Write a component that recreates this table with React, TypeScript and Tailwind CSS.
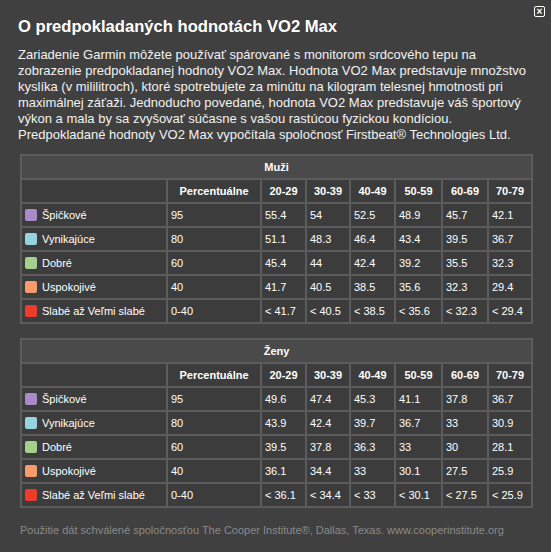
import React from 'react'

type Row = { label: string; color: string; pct: string; values: string[] }

const men: Row[] = [
  { label: 'Špičkové', color: 'bg-[#a98bc8]', pct: '95', values: ['55.4', '54', '52.5', '48.9', '45.7', '42.1'] },
  { label: 'Vynikajúce', color: 'bg-[#95d4de]', pct: '80', values: ['51.1', '48.3', '46.4', '43.4', '39.5', '36.7'] },
  { label: 'Dobré', color: 'bg-[#a3d08a]', pct: '60', values: ['45.4', '44', '42.4', '39.2', '35.5', '32.3'] },
  { label: 'Uspokojivé', color: 'bg-[#f79a6c]', pct: '40', values: ['41.7', '40.5', '38.5', '35.6', '32.3', '29.4'] },
  { label: 'Slabé až Veľmi slabé', color: 'bg-[#ec3b2b]', pct: '0-40', values: ['< 41.7', '< 40.5', '< 38.5', '< 35.6', '< 32.3', '< 29.4'] },
]

const women: Row[] = [
  { label: 'Špičkové', color: 'bg-[#a98bc8]', pct: '95', values: ['49.6', '47.4', '45.3', '41.1', '37.8', '36.7'] },
  { label: 'Vynikajúce', color: 'bg-[#95d4de]', pct: '80', values: ['43.9', '42.4', '39.7', '36.7', '33', '30.9'] },
  { label: 'Dobré', color: 'bg-[#a3d08a]', pct: '60', values: ['39.5', '37.8', '36.3', '33', '30', '28.1'] },
  { label: 'Uspokojivé', color: 'bg-[#f79a6c]', pct: '40', values: ['36.1', '34.4', '33', '30.1', '27.5', '25.9'] },
  { label: 'Slabé až Veľmi slabé', color: 'bg-[#ec3b2b]', pct: '0-40', values: ['< 36.1', '< 34.4', '< 33', '< 30.1', '< 27.5', '< 25.9'] },
]

const ages = ['20-29', '30-39', '40-49', '50-59', '60-69', '70-79']

function VoTable({ title, rows }: { title: string; rows: Row[] }) {
  return (
    <div className="grid grid-cols-[144px_92px_43px_42px_43px_45px_44px_42px] auto-rows-[22px] gap-[2px] p-[2px] bg-[#5c5c5c] w-[513px] text-[11px] text-white">
      <div className="col-span-8 bg-[#4a4a4a] flex items-center justify-center font-bold">{title}</div>
      <div className="bg-[#3c3c3c]" />
      <div className="bg-[#3c3c3c] flex items-center justify-center font-bold">Percentuálne</div>
      {ages.map(a => (
        <div key={a} className="bg-[#3c3c3c] flex items-center justify-center font-bold">{a}</div>
      ))}
      {rows.map(r => (
        <React.Fragment key={r.label}>
          <div className="bg-[#3c3c3c] flex items-center pl-[3px] gap-[5px]">
            <span className={`w-[12px] h-[12px] rounded-[2px] ${r.color}`} />
            <span>{r.label}</span>
          </div>
          <div className="bg-[#3c3c3c] flex items-center pl-[3px]">{r.pct}</div>
          {r.values.map((v, i) => (
            <div key={i} className="bg-[#3c3c3c] flex items-center pl-[3px]">{v}</div>
          ))}
        </React.Fragment>
      ))}
    </div>
  )
}

export default function App() {
  return (
    <div className="relative w-[551px] h-[552px] bg-[#404040] font-['Liberation_Sans',Arial,sans-serif] overflow-hidden">
      <button className="absolute top-[6px] right-[6px] w-[11px] h-[11px] border border-white rounded-[2px] flex items-center justify-center text-white text-[10px] leading-none font-bold">
        ×
      </button>
      <div className="pt-[17px] pl-[18px] pr-[10px]">
        <h1 className="text-[16.6px] font-bold text-white leading-[20px]">O predpokladaných hodnotách VO2 Max</h1>
        <p className="mt-[10px] text-[13px] leading-[16px] text-[#f2f2f2]">
          Zariadenie Garmin môžete používať spárované s monitorom srdcového tepu na zobrazenie predpokladanej hodnoty VO2 Max. Hodnota VO2 Max predstavuje množstvo kyslíka (v mililitroch), ktoré spotrebujete za minútu na kilogram telesnej hmotnosti pri maximálnej záťaži. Jednoducho povedané, hodnota VO2 Max predstavuje váš športový výkon a mala by sa zvyšovať súčasne s vašou rastúcou fyzickou kondíciou. Predpokladané hodnoty VO2 Max vypočítala spoločnosť Firstbeat® Technologies Ltd.
        </p>
      </div>
      <div className="pl-[20px] mt-[11px] flex flex-col gap-[14px]">
        <VoTable title="Muži" rows={men} />
        <VoTable title="Ženy" rows={women} />
      </div>
      <p className="pl-[20px] mt-[14px] text-[11px] leading-[16px] text-[#8a8a8a]">
        Použitie dát schválené spoločnosťou The Cooper Institute®, Dallas, Texas. www.cooperinstitute.org
      </p>
    </div>
  )
}
